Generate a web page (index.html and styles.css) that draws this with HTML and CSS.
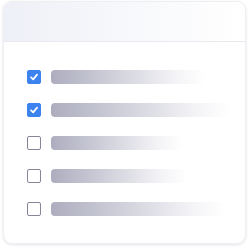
FILE: index.html
```html
<!DOCTYPE html>
<html>
<head>
<meta charset="utf-8">
<link rel="stylesheet" href="styles.css">
</head>
<body>
<div class="card">
  <div class="card-header"></div>
  <ul class="list">
    <li class="row"><span class="check checked"><svg viewBox="0 0 14 14"><path d="M3.5 7.3 L6 9.8 L10.6 4.2" /></svg></span><span class="bar" style="width:154px"></span></li>
    <li class="row"><span class="check checked"><svg viewBox="0 0 14 14"><path d="M3.5 7.3 L6 9.8 L10.6 4.2" /></svg></span><span class="bar" style="width:179px"></span></li>
    <li class="row"><span class="check"></span><span class="bar" style="width:132px"></span></li>
    <li class="row"><span class="check"></span><span class="bar" style="width:136px"></span></li>
    <li class="row"><span class="check"></span><span class="bar" style="width:174px"></span></li>
  </ul>
</div>
</body>
</html>
```
FILE: styles.css
```css
html, body { margin: 0; padding: 0; background: #fff; }
body { width: 249px; height: 249px; overflow: hidden; }
.card {
  margin: 1px 0 0 3px;
  width: 243px;
  height: 243px;
  box-sizing: border-box;
  border: 1px solid #eeeff3;
  border-radius: 9px;
  background: #fff;
  box-shadow: 0 1px 3px rgba(40, 40, 70, 0.12);
  overflow: hidden;
}
.card-header {
  height: 39px;
  background: linear-gradient(90deg, #eef0f7 0%, #f7f8fb 50%, #ffffff 100%);
  border-bottom: 1px solid #e9eaf0;
}
.list {
  list-style: none;
  margin: 0;
  padding: 28px 0 0 23px;
  display: flex;
  flex-direction: column;
  gap: 19px;
}
.row { display: flex; align-items: center; gap: 10px; height: 14px; }
.check {
  width: 14px; height: 14px;
  box-sizing: border-box;
  border: 1.5px solid #8a8499;
  border-radius: 2px;
  display: flex; align-items: center; justify-content: center;
  flex: none;
}
.check.checked { background: #3d83f0; border-color: #3d83f0; }
.check svg { width: 14px; height: 14px; }
.check path { fill: none; stroke: #fff; stroke-width: 2; stroke-linecap: round; stroke-linejoin: round; }
.bar {
  height: 14px;
  border-radius: 4px;
  background: linear-gradient(90deg, #adadbf 0%, #d3d4dd 45%, rgba(240,240,244,0.8) 80%, rgba(255,255,255,0) 100%);
}
```
